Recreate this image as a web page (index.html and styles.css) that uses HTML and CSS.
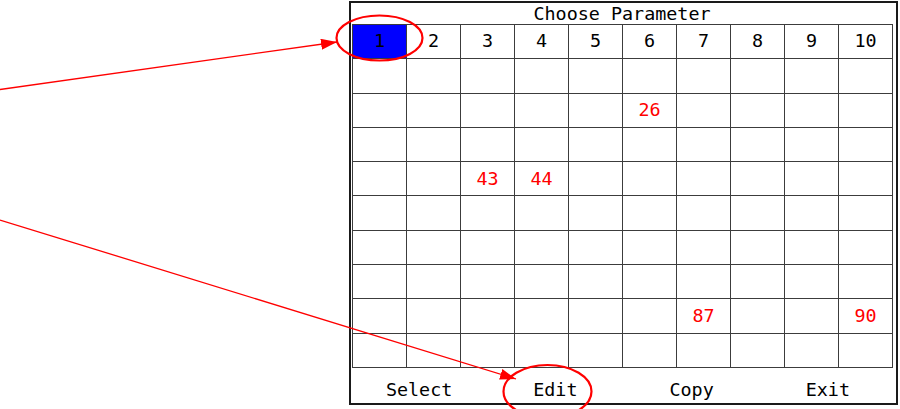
FILE: index.html
```html
<!DOCTYPE html>
<html lang="en">
<head>
<meta charset="utf-8">
<title>Choose Parameter</title>
<link rel="stylesheet" href="styles.css">
</head>
<body>
<div class="stage">
  <div class="panel">
    <div class="panel-title">Choose Parameter</div>
    <div class="param-grid">
      <div class="cell head selected">1</div>
      <div class="cell head">2</div>
      <div class="cell head">3</div>
      <div class="cell head">4</div>
      <div class="cell head">5</div>
      <div class="cell head">6</div>
      <div class="cell head">7</div>
      <div class="cell head">8</div>
      <div class="cell head">9</div>
      <div class="cell head">10</div>

      <div class="cell"></div><div class="cell"></div><div class="cell"></div><div class="cell"></div><div class="cell"></div>
      <div class="cell"></div><div class="cell"></div><div class="cell"></div><div class="cell"></div><div class="cell"></div>

      <div class="cell"></div><div class="cell"></div><div class="cell"></div><div class="cell"></div><div class="cell"></div>
      <div class="cell value">26</div><div class="cell"></div><div class="cell"></div><div class="cell"></div><div class="cell"></div>

      <div class="cell"></div><div class="cell"></div><div class="cell"></div><div class="cell"></div><div class="cell"></div>
      <div class="cell"></div><div class="cell"></div><div class="cell"></div><div class="cell"></div><div class="cell"></div>

      <div class="cell"></div><div class="cell"></div><div class="cell value">43</div><div class="cell value">44</div><div class="cell"></div>
      <div class="cell"></div><div class="cell"></div><div class="cell"></div><div class="cell"></div><div class="cell"></div>

      <div class="cell"></div><div class="cell"></div><div class="cell"></div><div class="cell"></div><div class="cell"></div>
      <div class="cell"></div><div class="cell"></div><div class="cell"></div><div class="cell"></div><div class="cell"></div>

      <div class="cell"></div><div class="cell"></div><div class="cell"></div><div class="cell"></div><div class="cell"></div>
      <div class="cell"></div><div class="cell"></div><div class="cell"></div><div class="cell"></div><div class="cell"></div>

      <div class="cell"></div><div class="cell"></div><div class="cell"></div><div class="cell"></div><div class="cell"></div>
      <div class="cell"></div><div class="cell"></div><div class="cell"></div><div class="cell"></div><div class="cell"></div>

      <div class="cell"></div><div class="cell"></div><div class="cell"></div><div class="cell"></div><div class="cell"></div>
      <div class="cell"></div><div class="cell value">87</div><div class="cell"></div><div class="cell"></div><div class="cell value">90</div>

      <div class="cell"></div><div class="cell"></div><div class="cell"></div><div class="cell"></div><div class="cell"></div>
      <div class="cell"></div><div class="cell"></div><div class="cell"></div><div class="cell"></div><div class="cell"></div>
    </div>
    <div class="softkeys">
      <div class="softkey">Select</div>
      <div class="softkey">Edit</div>
      <div class="softkey">Copy</div>
      <div class="softkey">Exit</div>
    </div>
  </div>

  <!-- callout arrows and rings drawn over the panel -->
  <svg class="callouts" width="900" height="409" viewBox="0 0 900 409">
    <defs>
      <marker id="arrowhead" markerWidth="10" markerHeight="8" refX="10" refY="4" orient="auto" markerUnits="userSpaceOnUse" viewBox="0 0 10 8">
        <path d="M0,0 L10,4 L0,8 Z" fill="#ff0000"/>
      </marker>
      <marker id="arrowhead-lg" markerWidth="16" markerHeight="11" refX="16" refY="5.5" orient="auto" markerUnits="userSpaceOnUse" viewBox="0 0 16 11">
        <path d="M0,0 L16,5.5 L0,11 Z" fill="#ff0000"/>
      </marker>
    </defs>
    <line x1="0" y1="89.5" x2="337" y2="42" stroke="#ff0000" stroke-width="1.3" marker-end="url(#arrowhead-lg)"/>
    <line x1="0" y1="220" x2="516" y2="379" stroke="#ff0000" stroke-width="1.3" marker-end="url(#arrowhead-lg)"/>
    <ellipse cx="379.5" cy="38" rx="43" ry="22.5" fill="none" stroke="#ff0000" stroke-width="2.2"/>
    <ellipse cx="547.5" cy="391.5" rx="44" ry="26.5" fill="none" stroke="#ff0000" stroke-width="2.2"/>
  </svg>
</div>
</body>
</html>
```

FILE: styles.css
```css
html, body {
  margin: 0;
  padding: 0;
  background: #ffffff;
}

body {
  font-family: "DejaVu Sans Mono", "Liberation Mono", monospace;
  font-size: 18.4px;
  color: #000000;
}

.stage {
  position: relative;
  width: 900px;
  height: 409px;
  overflow: hidden;
  padding: 1px 0 0 349px;
  box-sizing: border-box;
}

.panel {
  width: 549px;
  height: 404px;
  box-sizing: border-box;
  border: 2px solid #1a1a1a;
  display: flex;
  flex-direction: column;
  padding-left: 1px;
}

.panel-title {
  height: 21px;
  line-height: 21px;
  text-align: center;
  margin-right: 4px;
}

.param-grid {
  width: 541px;
  height: 344px;
  box-sizing: border-box;
  display: grid;
  grid-template-columns: repeat(10, 1fr);
  grid-template-rows: repeat(10, 1fr);
  gap: 1px;
  padding: 1px;
  background: #3c3c3c;
}

.cell {
  background: #ffffff;
  display: flex;
  align-items: center;
  justify-content: center;
  line-height: 1;
}

.cell.selected {
  background: #0000ff;
}

.cell.value {
  color: #ff0000;
}

.softkeys {
  flex: 1;
  display: grid;
  grid-template-columns: repeat(4, 1fr);
  margin-left: -1px;
}

.softkey {
  text-align: center;
  padding-top: 11px;
  line-height: 22px;
}

.callouts {
  position: absolute;
  left: 0;
  top: 0;
  pointer-events: none;
}
```
